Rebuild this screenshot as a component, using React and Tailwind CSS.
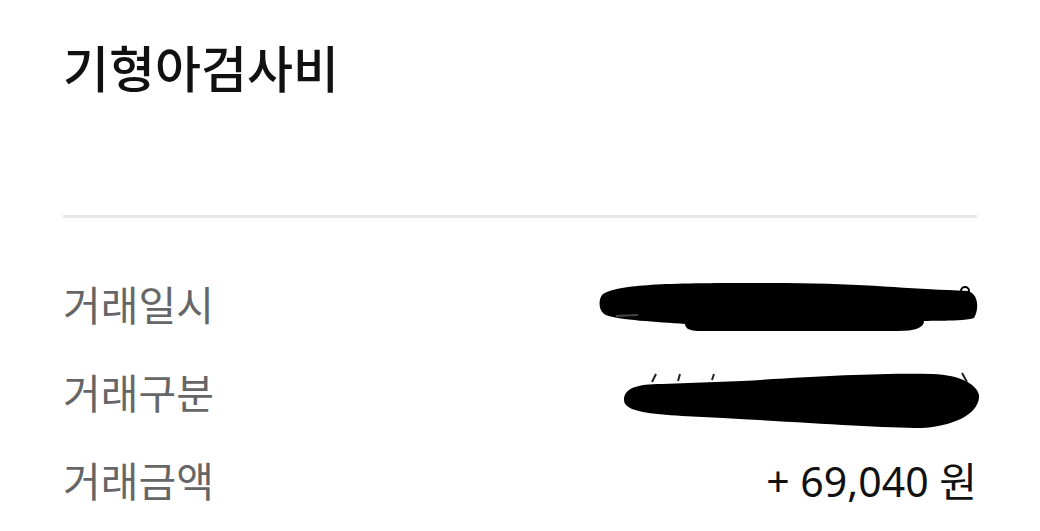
import React from 'react';

const KR = { fontFamily: '"Noto Sans", "Noto Sans CJK KR", sans-serif' };

// 가려진 값 (검은 낙서)
const Scribble1 = () => (
  <svg width="382" height="56" viewBox="0 0 382 56" className="block">
    <path
      d="M5 14 C20 5 60 3 150 3 C250 2 300 8 350 10 L370 11 C381 14 381 30 376 38 C362 42 340 40 326 41 C326 48 316 51 300 51 L100 51 C90 51 87 47 87 44 C60 42 20 40 8 35 C0 32 0 18 5 14 Z"
      fill="#000"
    />
    <circle cx="367" cy="11" r="4" fill="none" stroke="#000" strokeWidth="2" />
    <path d="M18 36 L40 35" stroke="#444" strokeWidth="2" />
  </svg>
);

const Scribble2 = () => (
  <svg width="360" height="62" viewBox="0 0 360 62" className="block">
    <path
      d="M2 30 C2 18 15 14 40 14 L120 11 C200 6 260 3 310 4 C340 5 355 15 357 25 C358 40 340 55 300 58 C250 58 150 50 60 46 C30 44 2 42 2 30 Z"
      fill="#000"
    />
    <path d="M30 12 L34 4 M56 11 L58 4 M90 10 L92 4 M345 12 L340 3" stroke="#222" strokeWidth="2" />
  </svg>
);

const Row = ({ label, children }) => (
  <div className="flex h-[88px] items-center justify-between">
    <span className="text-[41px] leading-none text-[#666666]">{label}</span>
    {children}
  </div>
);

export default function App() {
  return (
    <div className="h-[531px] w-[1040px] overflow-hidden bg-white px-[63px]" style={KR}>
      <h1 className="pt-[37px] text-[50px] font-medium leading-[64px] text-[#111111]">
        기형아검사비
      </h1>
      <div className="mt-[114px] h-[3px] bg-[#e6e6e6]" />
      <div className="mt-[43px]">
        <Row label="거래일시">
          <div className="-mr-[3px] mt-[6px]">
            <Scribble1 />
          </div>
        </Row>
        <Row label="거래구분">
          <div className="-mr-[5px] mt-[16px]">
            <Scribble2 />
          </div>
        </Row>
        <Row label="거래금액">
          <span className="text-[41px] leading-none text-[#111111]">+ 69,040 원</span>
        </Row>
      </div>
    </div>
  );
}
